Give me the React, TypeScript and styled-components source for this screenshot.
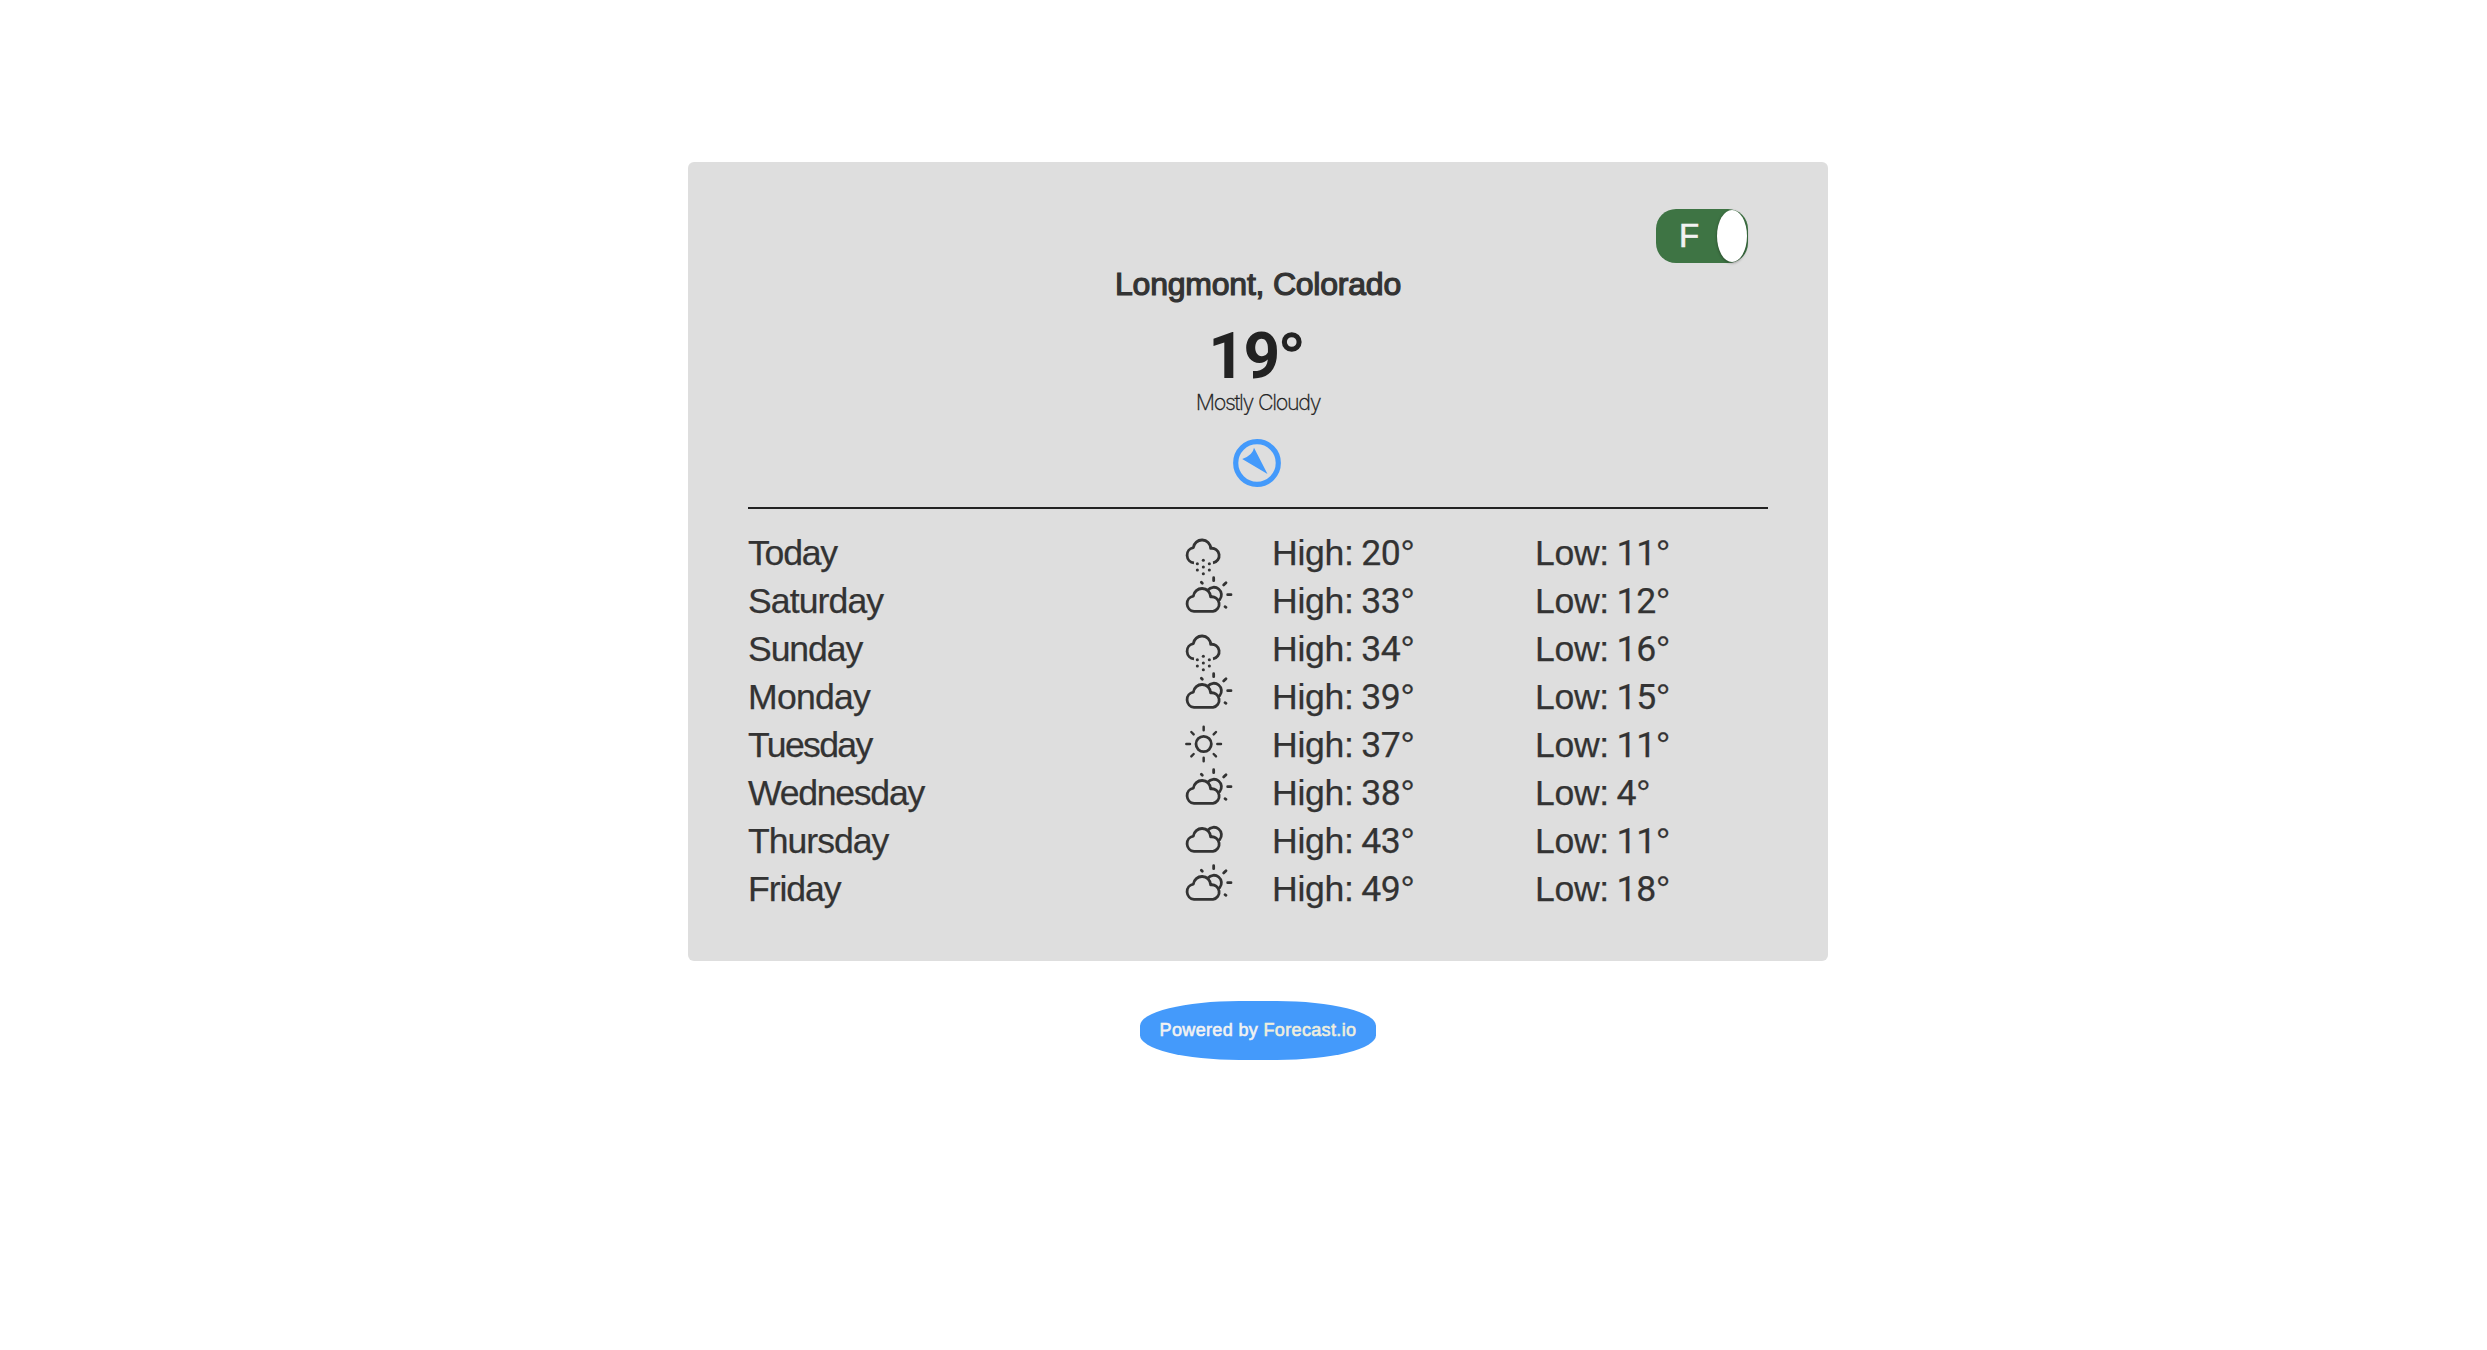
import React from 'react';
import styled, { createGlobalStyle } from 'styled-components';

const GlobalStyle = createGlobalStyle`
  body {
    margin: 0;
    background: #fff;
    font-family: "Liberation Sans", Arial, sans-serif;
    color: #333;
  }
`;

const Page = styled.main`
  display: flex;
  flex-direction: column;
  align-items: center;
  box-sizing: border-box;
  min-height: 1350px;
  padding: 162px 0 0 29px;
`;

const Card = styled.section`
  display: flex;
  flex-direction: column;
  box-sizing: border-box;
  width: 1140px;
  height: 799px;
  padding: 47px 60px 0;
  border-radius: 6px;
  background: #dedede;
`;

const Toggle = styled.button`
  display: flex;
  align-items: center;
  justify-content: space-between;
  align-self: flex-end;
  box-sizing: border-box;
  width: 92px;
  height: 54px;
  margin: 0 20px 0 0;
  padding: 0 1px 0 23px;
  border: 0;
  border-radius: 20px;
  background: #3e7444;
  color: #f2f2f2;
  font: 33px "Liberation Sans", Arial, sans-serif;
  -webkit-text-stroke: 0.6px #f2f2f2;
`;

const Knob = styled.span`
  width: 30px;
  height: 52px;
  border-radius: 50%;
  background: #fff;
  box-shadow: 0 1px 3px rgba(0, 0, 0, 0.4);
`;

const Current = styled.div`
  display: flex;
  flex-direction: column;
  align-items: center;
  height: 244px;
`;

const Place = styled.h1`
  margin: 1px 0 0;
  font-size: 32px;
  line-height: 40px;
  font-weight: 400;
  letter-spacing: -0.22px;
  -webkit-text-stroke: 1.2px #333;
`;

const Temperature = styled.div`
  display: flex;
  align-items: baseline;
  height: 66px;
  margin: 19px 3px 0 0;
  color: #222;
  font-size: 65px;
  line-height: 66px;
  font-weight: 400;
`;

const TemperatureValue = styled.span`
  font-family: Roboto, "Liberation Sans", sans-serif;
  font-size: 64px;
  font-weight: 700;
  letter-spacing: -1.5px;
`;

const Degree = styled.span`
  -webkit-text-stroke: 1.6px #222;
`;

const Summary = styled.div`
  color: #222;
  font-family: Inter, "Liberation Sans", sans-serif;
  font-size: 21.5px;
  line-height: 26px;
  font-weight: 200;
  letter-spacing: -1.3px;
  -webkit-text-stroke: 0.3px #222;
`;

const Compass = styled.svg`
  width: 48px;
  height: 48px;
  margin: 24px 1.5px 0 0;
`;

const Forecast = styled.ul`
  margin: 0;
  padding: 20px 0 0;
  border-top: 2px solid #222;
  list-style: none;
`;

const Day = styled.li`
  display: grid;
  grid-template-columns: 432px 92px 263px 1fr;
  height: 48px;
  font-size: 35.6px;
  line-height: 48px;
  white-space: nowrap;
  -webkit-text-stroke: 0.25px #333;
`;

const DayName = styled.span<{ $spacing: number }>`
  letter-spacing: ${({ $spacing }) => $spacing}px;
`;

const Reading = styled.span`
  letter-spacing: -0.3px;
  word-spacing: -2px;
`;

const Value = styled.span`
  font-family: Roboto, "Liberation Sans", sans-serif;
  line-height: 1;
`;

const Glyph = styled.svg`
  width: 60px;
  height: 48px;
  overflow: visible;
  fill: none;
  stroke: #333;
  stroke-width: 8.4;
  stroke-linecap: round;
  stroke-linejoin: round;
`;

const Credit = styled.div`
  display: flex;
  align-items: center;
  justify-content: center;
  width: 236px;
  height: 59px;
  margin-top: 40px;
  border-radius: 42%;
  background: #449afb;
  color: #f2f2f2;
  font-size: 18px;
  letter-spacing: 0.35px;
  white-space: pre;
  -webkit-text-stroke: 0.6px currentColor;
`;

const CreditLink = styled.a`
  color: #eeeedd;
`;

type Weather = 'snow' | 'partly' | 'sun' | 'cloudy';

const CLOUD_OUTLINE = 'M42 103A23 23 0 0 1 40 57.5A26.1 26.1 0 0 1 92 59.5A22 22 0 1 1 99 103';
const BACK = 'M84 39A22.6 22.6 0 1 1 119 68';

const WeatherIcon = ({ kind }: { kind: Weather }) => (
  <Glyph viewBox="0 0 180 144">
    {kind === 'snow' && (
      <>
        <path d={CLOUD_OUTLINE} strokeLinecap="butt" transform="translate(0 -1.5)" />
        <g fill="#333" stroke="none">
          {[[70, 94], [52, 104], [88, 104], [70, 114], [52, 123], [88, 123], [70, 134]].map(([x, y]) => (
            <circle key={`${x}-${y}`} cx={x} cy={y} r="4.6" />
          ))}
        </g>
      </>
    )}
    {(kind === 'partly' || kind === 'cloudy') && (
      <>
        <path d={`${CLOUD_OUTLINE}Z`} />
        <path d={BACK} />
      </>
    )}
    {kind === 'partly' && <path d="M101 2V11M131 24L138 17M143 53H153M135 89L138 91M64 16L67 19" />}
    {kind === 'sun' && (
      <>
        <circle cx="71" cy="69" r="23" />
        <path
          strokeWidth="7.4"
          d="M71 17V28M71 110V121M19 69H30M112 69H123M34 33L41 40M101 99L108 106M108 33L101 40M41 99L34 106"
        />
      </>
    )}
  </Glyph>
);

const DAYS: { day: string; icon: Weather; high: number; low: number; spacing: number }[] = [
  { day: 'Today', icon: 'snow', high: 20, low: 11, spacing: -1.2 },
  { day: 'Saturday', icon: 'partly', high: 33, low: 12, spacing: -0.9 },
  { day: 'Sunday', icon: 'snow', high: 34, low: 16, spacing: -1.1 },
  { day: 'Monday', icon: 'partly', high: 39, low: 15, spacing: -0.75 },
  { day: 'Tuesday', icon: 'sun', high: 37, low: 11, spacing: -1.65 },
  { day: 'Wednesday', icon: 'partly', high: 38, low: 4, spacing: -1.25 },
  { day: 'Thursday', icon: 'cloudy', high: 43, low: 11, spacing: -1 },
  { day: 'Friday', icon: 'partly', high: 49, low: 18, spacing: -1.05 },
];

export default function App() {
  return (
    <>
      <GlobalStyle />
      <Page>
        <Card>
          <Toggle>
            F<Knob />
          </Toggle>
          <Current>
            <Place>Longmont, Colorado</Place>
            <Temperature>
              <TemperatureValue>19</TemperatureValue>
              <Degree>°</Degree>
            </Temperature>
            <Summary>Mostly Cloudy</Summary>
            <Compass viewBox="0 0 48 48">
              <circle cx="24" cy="24" r="21.3" fill="none" stroke="#449afb" strokeWidth="5.2" />
              <path d="M21 8.7Q20 16 9.2 20L34.5 35Z" fill="#449afb" />
            </Compass>
          </Current>
          <Forecast>
            {DAYS.map(({ day, icon, high, low, spacing }) => (
              <Day key={day}>
                <DayName $spacing={spacing}>{day}</DayName>
                <WeatherIcon kind={icon} />
                <Reading>
                  High: <Value>{high}</Value>°
                </Reading>
                <Reading>
                  Low: <Value>{low}</Value>°
                </Reading>
              </Day>
            ))}
          </Forecast>
        </Card>
        <Credit>
          Powered by <CreditLink>Forecast.io</CreditLink>
        </Credit>
      </Page>
    </>
  );
}
